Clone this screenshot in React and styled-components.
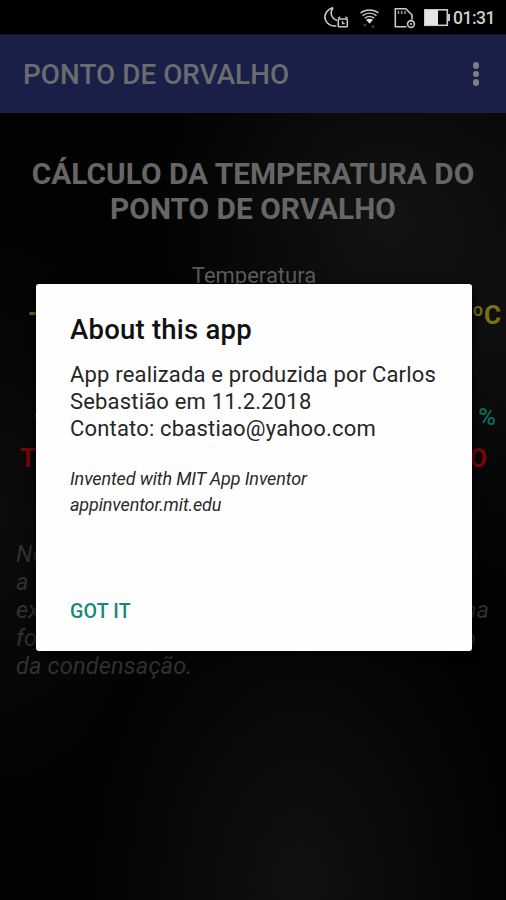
import React from "react";
import styled, { createGlobalStyle } from "styled-components";

const GlobalStyle = createGlobalStyle`
  * { box-sizing: border-box; }
  html, body { margin: 0; background: #000; }
  body { font-family: Roboto, "Liberation Sans", sans-serif; }
  h1, h2, p { margin: 0; }
`;

const Screen = styled.div`
  position: relative;
  display: flex;
  flex-direction: column;
  width: 506px;
  height: 900px;
  overflow: hidden;
  background: #000;
`;

const StatusBar = styled.header`
  display: flex;
  align-items: center;
  justify-content: flex-end;
  height: 34px;
  flex: none;
  padding-right: 10px;
  background: #000;
`;

const StatusIcons = styled.svg`
  display: block;
  width: 130px;
  height: 34px;
  flex: none;
`;

const Clock = styled.span`
  width: 43px;
  padding-top: 2px;
  font-size: 17.5px;
  font-weight: 500;
  letter-spacing: -0.5px;
  line-height: 34px;
  color: #cfcfcf;
  white-space: nowrap;
`;

const AppBar = styled.div`
  display: flex;
  align-items: center;
  justify-content: space-between;
  height: 79px;
  flex: none;
  padding: 0 27px 0 23px;
  background: #1a1f47;
  border-top: 1px solid #12142e;
`;

const AppTitle = styled.h1`
  padding-top: 2px;
  font-size: 27.8px;
  font-weight: 500;
  letter-spacing: 0.06px;
  line-height: 32px;
  color: #696d70;
  white-space: nowrap;
`;

const MenuButton = styled.button`
  display: grid;
  gap: 2.4px;
  padding: 0;
  border: 0;
  background: none;
`;

const Dot = styled.span`
  width: 6.2px;
  height: 6.2px;
  border-radius: 50%;
  background: #7c8087;
`;

const Content = styled.main`
  display: flex;
  flex-direction: column;
  flex: 1;
  background:
    radial-gradient(ellipse 240px 260px at 390px 110px, #131313 0%, rgba(18, 18, 18, 0) 100%),
    radial-gradient(ellipse 220px 330px at 300px 770px, #111 0%, rgba(14, 14, 14, 0) 100%),
    radial-gradient(ellipse 170px 300px at 0px 400px, #0c0c0c 0%, rgba(12, 12, 12, 0) 100%),
    radial-gradient(ellipse 120px 260px at 506px 230px, #0c0c0c 0%, rgba(12, 12, 12, 0) 100%),
    #020202;
`;

const Heading = styled.h2`
  margin-top: 43px;
  font-size: 29.85px;
  font-weight: 700;
  line-height: 35px;
  text-align: center;
  color: #666;
`;

const FieldLabel = styled.p`
  margin-top: 37px;
  padding-left: 2px;
  font-size: 22px;
  line-height: 26px;
  text-align: center;
  color: #5c5c5c;
`;

const Reading = styled.div`
  display: flex;
  justify-content: space-between;
  align-items: center;
  height: 30px;
  margin-top: ${(p) => p.$gap}px;
  padding: 0 ${(p) => p.$right}px 0 ${(p) => p.$left}px;
  font-size: ${(p) => p.$size}px;
  font-weight: ${(p) => p.$weight};
  color: ${(p) => p.$color};
`;

const Sign = styled.span`
  padding-bottom: 5px;
`;

const Note = styled.div`
  margin-top: 67px;
  padding: 0 17px 0 16px;
  font-size: 23.6px;
  font-style: italic;
  line-height: 28px;
  letter-spacing: 0.15px;
  color: #303030;
`;

const NoteLine = styled.div`
  display: flex;
  justify-content: space-between;
  height: 28px;
  padding-right: ${(p) => p.$right || 0}px;
`;

const Dialog = styled.section`
  position: absolute;
  left: 36px;
  top: 284px;
  display: flex;
  flex-direction: column;
  align-items: flex-start;
  width: 436px;
  height: 367px;
  padding: 29px 30px 0 34px;
  border-radius: 3px;
  background: #fefefe;
  box-shadow: 0 3px 10px #000;
`;

const DialogTitle = styled.h2`
  font-size: 27.5px;
  font-weight: 500;
  letter-spacing: 0.22px;
  line-height: 34px;
  color: #111;
  white-space: nowrap;
`;

const DialogText = styled.p`
  margin-top: 14px;
  font-size: 22px;
  letter-spacing: 0.18px;
  line-height: 27px;
  color: #262626;
  white-space: nowrap;
`;

const Credit = styled.p`
  margin-top: 24px;
  font-size: 18px;
  font-style: italic;
  letter-spacing: -0.13px;
  line-height: 25.5px;
  color: #2a2a2a;
  white-space: nowrap;
`;

const ConfirmButton = styled.button`
  margin: 83px 0 0;
  padding: 0;
  border: 0;
  background: none;
  font: 500 19.6px/24px Roboto, sans-serif;
  letter-spacing: 0.15px;
  color: #128a77;
`;

export default function App() {
  return (
    <Screen>
      <GlobalStyle />
      <StatusBar>
        <StatusIcons viewBox="323 0 130 34" fill="none" stroke="#c9c9c9" strokeWidth="1.600">
          {/* do-not-disturb moon with alarm */}
          <path d="M333 7.500C327 9.500 323.800 14.500 325.300 19.500c1.500 4.500 6 7.200 11 6.300M333 7.500c-3.500 5.500-2 10.500 4 13" />
          <rect x="338.300" y="19" width="9" height="7.800" rx="0.800" />
          <path d="M338 18.300l2.300-1.500M347.600 18.300l-2.300-1.500M342.500 21v2.500h2.200" strokeWidth="1.300" />
          {/* wifi */}
          <path d="M360.500 13c5.200-4 12.800-4 18 0M362.500 15.600c4.200-3.300 9.800-3.300 14 0M364.800 18.200c2.800-2.200 6.600-2.200 9.400 0" strokeWidth="1.400" />
          <path d="M366 19.800c2-1.400 5-1.400 7 0l-3.500 4z" fill="#ddd" stroke="none" />
          <path d="M363 24h4l-2 3zM371 27.500h4l-2-3z" fill="#444" stroke="none" />
          {/* memory card */}
          <path d="M406.500 26.700h-11.200v-18h10.500l6.200 6.300v4.500" />
          <path d="M398.500 11v3M401.700 11v3M405 11v3" strokeWidth="1.500" stroke="#999" />
          <circle cx="411" cy="24" r="3.400" />
          <circle cx="411" cy="24" r="1.100" fill="#ccc" stroke="none" />
          {/* battery */}
          <rect x="424.800" y="9.800" width="22.500" height="15.500" />
          <rect x="425" y="10" width="13" height="15" fill="#e6e6e6" stroke="none" />
          <path d="M449 14v7" strokeWidth="2" />
        </StatusIcons>
        <Clock>01:31</Clock>
      </StatusBar>
      <AppBar>
        <AppTitle>PONTO DE ORVALHO</AppTitle>
        <MenuButton aria-label="Menu">
          <Dot />
          <Dot />
          <Dot />
        </MenuButton>
      </AppBar>
      <Content>
        <Heading>
          CÁLCULO DA TEMPERATURA DO
          <br />
          PONTO DE ORVALHO
        </Heading>
        <FieldLabel>Temperatura</FieldLabel>
        <Reading $gap={11} $left={28} $right={5} $size={26} $weight={700} $color="#7a7016">
          <Sign>-</Sign>
          <span>ºC</span>
        </Reading>
        <Reading $gap={72} $left={34} $right={10} $size={24} $weight={500} $color="#0f6a5e">
          <Sign>-</Sign>
          <span>%</span>
        </Reading>
        <Reading $gap={11} $left={20} $right={19} $size={25.500} $weight={700} $color="#780606">
          <span>T</span>
          <span>O</span>
        </Reading>
        <Note>
          <NoteLine>No</NoteLine>
          <NoteLine>a</NoteLine>
          <NoteLine>
            <span>ex</span>
            <span>ma</span>
          </NoteLine>
          <NoteLine $right={13}>
            <span>fo</span>
            <span>o</span>
          </NoteLine>
          <NoteLine>da condensação.</NoteLine>
        </Note>
      </Content>
      <Dialog role="dialog">
        <DialogTitle>About this app</DialogTitle>
        <DialogText>
          App realizada e produzida por Carlos
          <br />
          Sebastião em 11.2.2018
          <br />
          Contato: cbastiao@yahoo.com
        </DialogText>
        <Credit>
          Invented with MIT App Inventor
          <br />
          appinventor.mit.edu
        </Credit>
        <ConfirmButton>GOT IT</ConfirmButton>
      </Dialog>
    </Screen>
  );
}
